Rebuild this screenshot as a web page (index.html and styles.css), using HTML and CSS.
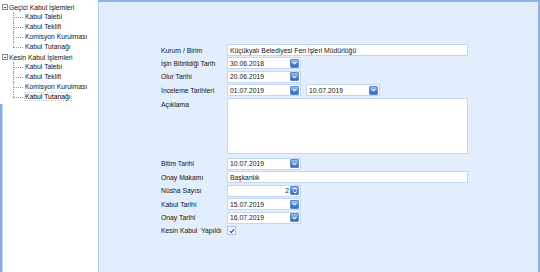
FILE: index.html
```html
<!DOCTYPE html>
<html lang="tr">
<head>
    <meta charset="UTF-8">
    <title>Kabul İşlemleri</title>
    <link rel="stylesheet" href="styles.css">
</head>
<body>
    <div class="window">
        <aside class="side">
            <ul class="tree">
                <li>
                    <div class="node"><span class="toggle"></span>Geçici Kabul İşlemleri</div>
                    <ul class="leaves">
                        <li>Kabul Talebi</li>
                        <li>Kabul Teklifi</li>
                        <li>Komisyon Kurulması</li>
                        <li>Kabul Tutanağı</li>
                    </ul>
                </li>
                <li>
                    <div class="node"><span class="toggle"></span>Kesin Kabul İşlemleri</div>
                    <ul class="leaves">
                        <li>Kabul Talebi</li>
                        <li>Kabul Teklifi</li>
                        <li>Komisyon Kurulması</li>
                        <li><span class="selected">Kabul Tutanağı</span></li>
                    </ul>
                </li>
            </ul>
            <div class="side-fill"></div>
        </aside>

        <main class="pane">
            <form class="form">
                <div class="row">
                    <label>Kurum / Birim</label>
                    <div class="field wide">Küçükyalı Belediyesi Fen İşleri Müdürlüğü</div>
                </div>
                <div class="row">
                    <label>İşin Bitirildiği Tarih</label>
                    <div class="field date"><span>30.06.2018</span><span class="btn"><svg width="5" height="4" viewBox="0 0 5 4"><path d="M0.6 0.8 L2.5 2.8 L4.4 0.8" stroke="#fff" stroke-width="1.1" fill="none"/></svg></span></div>
                </div>
                <div class="row">
                    <label>Olur Tarihi</label>
                    <div class="field date"><span>20.06.2019</span><span class="btn"><svg width="5" height="4" viewBox="0 0 5 4"><path d="M0.6 0.8 L2.5 2.8 L4.4 0.8" stroke="#fff" stroke-width="1.1" fill="none"/></svg></span></div>
                </div>
                <div class="row">
                    <label>İnceleme Tarihleri</label>
                    <div class="field date"><span>01.07.2019</span><span class="btn"><svg width="5" height="4" viewBox="0 0 5 4"><path d="M0.6 0.8 L2.5 2.8 L4.4 0.8" stroke="#fff" stroke-width="1.1" fill="none"/></svg></span></div>
                    <div class="field date second"><span>10.07.2019</span><span class="btn"><svg width="5" height="4" viewBox="0 0 5 4"><path d="M0.6 0.8 L2.5 2.8 L4.4 0.8" stroke="#fff" stroke-width="1.1" fill="none"/></svg></span></div>
                </div>
                <div class="row tall">
                    <label>Açıklama</label>
                    <div class="memo"></div>
                </div>
                <div class="row">
                    <label>Bitim Tarihi</label>
                    <div class="field date"><span>10.07.2019</span><span class="btn"><svg width="5" height="4" viewBox="0 0 5 4"><path d="M0.6 0.8 L2.5 2.8 L4.4 0.8" stroke="#fff" stroke-width="1.1" fill="none"/></svg></span></div>
                </div>
                <div class="row">
                    <label>Onay Makamı</label>
                    <div class="field wide">Başkanlık</div>
                </div>
                <div class="row">
                    <label>Nüsha Sayısı</label>
                    <div class="field date spin"><span>2</span><span class="btn"><svg width="6" height="7" viewBox="0 0 6 7"><path d="M1 2.6 L3 1 L5 2.6 M1 4.4 L3 6 L5 4.4" stroke="#fff" stroke-width="1" fill="none"/></svg></span></div>
                </div>
                <div class="row">
                    <label>Kabul Tarihi</label>
                    <div class="field date"><span>15.07.2019</span><span class="btn"><svg width="5" height="4" viewBox="0 0 5 4"><path d="M0.6 0.8 L2.5 2.8 L4.4 0.8" stroke="#fff" stroke-width="1.1" fill="none"/></svg></span></div>
                </div>
                <div class="row">
                    <label>Onay Tarihi</label>
                    <div class="field date"><span>16.07.2019</span><span class="btn"><svg width="5" height="4" viewBox="0 0 5 4"><path d="M0.6 0.8 L2.5 2.8 L4.4 0.8" stroke="#fff" stroke-width="1.1" fill="none"/></svg></span></div>
                </div>
                <div class="row">
                    <label>Kesin Kabul&nbsp; Yapıldı</label>
                    <span class="check"><svg width="6" height="6" viewBox="0 0 6 6"><path d="M1 3 L2.4 4.5 L5 1.2" stroke="#2f5fb3" stroke-width="1.2" fill="none"/></svg></span>
                </div>
            </form>
        </main>
    </div>
</body>
</html>
```

FILE: styles.css
```css
body {
    margin: 0;
    font-family: "Liberation Sans", Arial, sans-serif;
    font-size: 6.8px;
    color: #151515;
    background: #fff;
}
.window {
    display: flex;
    height: 272px;
}

/* sol agac */
.side {
    width: 99px;
    flex: none;
    display: flex;
    flex-direction: column;
    background: #fff;
    border-right: 1px solid #b4cdef;
    box-sizing: border-box;
}
.tree {
    list-style: none;
    margin: 0;
    padding: 2px 0 0 0;
    height: 102px;
}
.node {
    display: flex;
    align-items: center;
    height: 10px;
    padding-left: 2px;
    white-space: nowrap;
}
.toggle {
    width: 6px;
    height: 6px;
    box-sizing: border-box;
    border: 1px solid #8f8f8f;
    margin-right: 1px;
    background: linear-gradient(#444, #444) center / 2px 1px no-repeat;
}
.leaves {
    list-style: none;
    margin: 0 0 0 13px;
    padding: 0;
}
.leaves li {
    position: relative;
    height: 10px;
    line-height: 10px;
    padding-left: 12px;
    white-space: nowrap;
}
.leaves li::before {
    content: "";
    position: absolute;
    left: 0;
    top: 5px;
    width: 10px;
    border-top: 1px dotted #9a9a9a;
}
.leaves li::after {
    content: "";
    position: absolute;
    left: 0;
    top: 0;
    bottom: 0;
    border-left: 1px dotted #9a9a9a;
}
.leaves li:last-child::after {
    bottom: 5px;
}
.selected {
    outline: 1px dotted #cfcfcf;
    color: #000;
}
.side-fill {
    flex: 1;
    border-left: 2px solid #86ace5;
    box-shadow: inset 1px 0 0 #c4d9f5;
}

/* form alani */
.pane {
    flex: 1;
    background: #e2eefc;
    border-top: 2px solid #8cb3e7;
    border-right: 2px solid #8cb3e7;
}
.form {
    padding: 42px 0 0 62px;
}
.row {
    display: flex;
    align-items: center;
    height: 12px;
    margin-bottom: 1.4px;
}
.row label {
    width: 66px;
    flex: none;
    white-space: nowrap;
}
.field {
    display: flex;
    align-items: center;
    height: 12px;
    box-sizing: border-box;
    border: 1px solid #c4d7f0;
    background: #fff;
    padding-left: 2px;
    white-space: nowrap;
}
.wide {
    width: 241px;
}
.date {
    width: 74px;
    justify-content: space-between;
    padding-right: 1px;
}
.second {
    margin-left: 5px;
}
.spin {
    justify-content: flex-end;
    gap: 1px;
}
.btn {
    display: flex;
    align-items: center;
    justify-content: center;
    width: 9px;
    height: 9px;
    box-sizing: border-box;
    border: 1px solid #5d88c9;
    border-radius: 1px;
    background: linear-gradient(#9cc0f0, #4b7ed0 60%, #3a6cc0);
}
.tall {
    height: 56px;
    align-items: flex-start;
    margin-bottom: 4.4px;
}
.tall label {
    padding-top: 3px;
}
.memo {
    width: 241px;
    height: 56px;
    box-sizing: border-box;
    border: 1px solid #c4d7f0;
    background: #fff;
}
.check {
    display: flex;
    align-items: center;
    justify-content: center;
    width: 7px;
    height: 7px;
    border: 1px solid #a8c2e6;
    background: #f4f8fe;
}
```
